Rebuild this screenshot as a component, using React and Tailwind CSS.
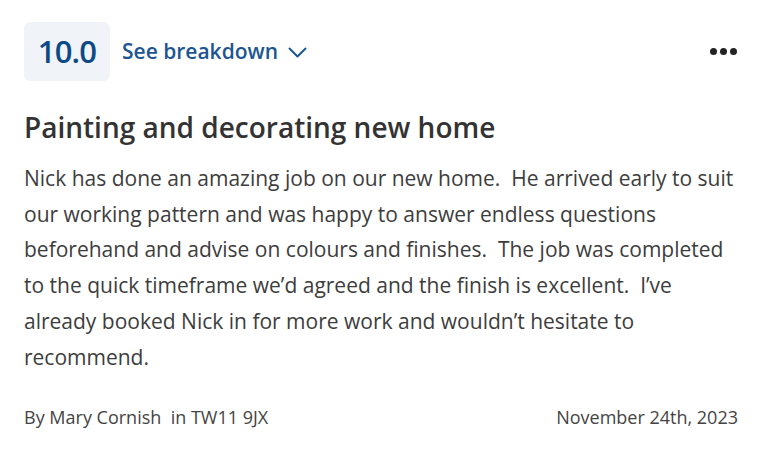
import React from 'react';

const review = {
    score: '10.0',
    title: 'Painting and decorating new home',
    body: 'Nick has done an amazing job on our new home.\u00a0 He arrived early to suit our working pattern and was happy to answer endless questions beforehand and advise on colours and finishes.\u00a0 The job was completed to the quick timeframe we\u2019d agreed and the finish is excellent.\u00a0 I\u2019ve already booked Nick in for more work and wouldn\u2019t hesitate to recommend.',
    author: 'Mary Cornish',
    postcode: 'TW11 9JX',
    date: 'November 24th, 2023',
};

const App = () => {
    return (
        <div className="bg-white w-[763px] h-[452px] px-6 pt-[22px] text-[#333] font-['Open_Sans',sans-serif]">
            {/* Header */}
            <div className="flex items-center justify-between pr-[1px]">
                <div className="flex items-center gap-3">
                    <div className="w-[86px] h-[59px] rounded-md bg-[#f0f4f9] flex items-center justify-center">
                        <span className="text-[31px] font-semibold text-[#0d4a85] tracking-tight">{review.score}</span>
                    </div>
                    <button className="flex items-center gap-[10px] text-[21px] font-semibold text-[#1d5592]">
                        See breakdown
                        <svg width="19" height="11" viewBox="0 0 19 11" fill="none" stroke="currentColor" strokeWidth="2" strokeLinecap="round" strokeLinejoin="round" className="mt-[2px]">
                            <polyline points="1.5,1.5 9.5,9.5 17.5,1.5" />
                        </svg>
                    </button>
                </div>
                <div className="flex items-center gap-[3px] pr-[1px]">
                    <span className="w-[7px] h-[7px] rounded-full bg-[#222]"></span>
                    <span className="w-[7px] h-[7px] rounded-full bg-[#222]"></span>
                    <span className="w-[7px] h-[7px] rounded-full bg-[#222]"></span>
                </div>
            </div>

            {/* Content */}
            <h2 className="mt-[27px] text-[28px] font-semibold text-[#333] leading-[38px]">{review.title}</h2>
            <p className="mt-[15px] pr-[2px] text-[21px] leading-[35.7px] text-[#3d3d3d]">{review.body}</p>

            {/* Footer */}
            <div className="mt-[30px] flex items-center justify-between pr-[1px] text-[18px] leading-[25px] text-[#444]">
                <span>By {review.author}&nbsp; in {review.postcode}</span>
                <span>{review.date}</span>
            </div>
        </div>
    );
};

export default App;
